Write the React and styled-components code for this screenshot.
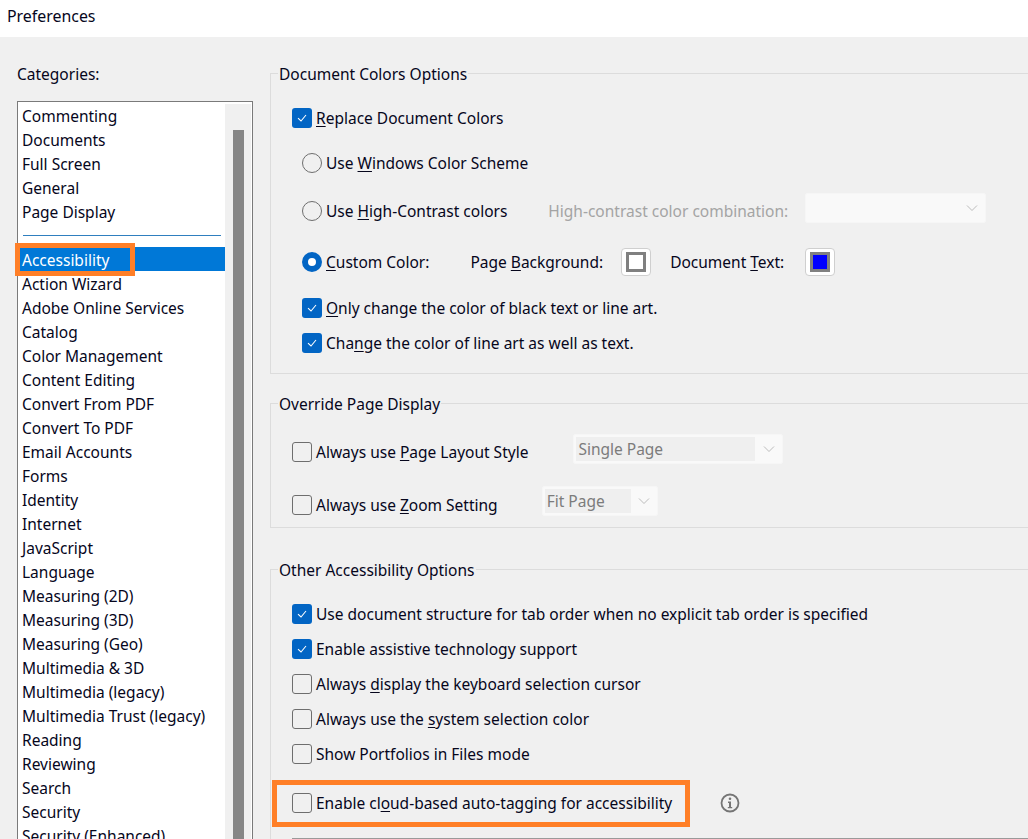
import React from "react";
import styled, { createGlobalStyle } from "styled-components";

const Global = createGlobalStyle`
  html, body { margin: 0; padding: 0; background: #f0f0f0; }
  body { font-family: "Noto Sans", "Liberation Sans", sans-serif; font-size: 15.5px; color: #06061c; }
`;
const Page = styled.div`
  width: 1028px; height: 839px; overflow: hidden; display: flex; flex-direction: column; background: #f0f0f0;
`;
const TitleBar = styled.header`
  height: 37px; flex: none; background: #fff; padding-left: 7px; display: flex; align-items: center; font-size: 15.9px; padding-bottom: 6px; box-sizing: border-box;
`;
const Body = styled.div`
  display: flex; flex: 1; min-height: 0; padding-left: 17px;
`;
const Sidebar = styled.aside`
  width: 236px; flex: none; display: flex; flex-direction: column;
`;
const CategoriesLabel = styled.div`
  height: 24px; line-height: 24px; margin-top: 25px; margin-bottom: 15px;
`;
const ListBox = styled.div`
  flex: 1; min-height: 0; display: flex; border: 1px solid #7a7a7a; border-bottom: none; background: #fff; padding: 2px 1px 0 1px;
`;
const Items = styled.ul`
  list-style: none; margin: 0; padding: 0; width: 206px; flex: none;
`;
const Item = styled.li`
  position: relative; height: 24px; padding-left: 3px; white-space: nowrap;
  line-height: ${p => (p.$selected ? 26 : 24)}px;
  margin-bottom: ${p => (p.$selected ? 1 : 0)}px;
  background: ${p => (p.$selected ? "#0078d7" : "transparent")};
  color: ${p => (p.$selected ? "#fff" : "inherit")};
`;
const ListDivider = styled.li`
  height: 23px; display: flex; align-items: center; padding: 0 4px;
  &::before { content: ""; flex: 1; height: 1px; background: #2f7fbf; }
`;
const Callout = styled.span`
  position: absolute; left: -4px; top: -4px; width: 120px; height: 33px; box-sizing: border-box; border: 5px solid #ff7f27;
`;
const ScrollTrack = styled.div`
  flex: 1; background: #f0f0f0; display: flex; justify-content: center; padding-top: 26px;
`;
const ScrollThumb = styled.div`
  width: 11px; background: #868686;
`;
const Main = styled.main`
  flex: 1; min-width: 0; margin-left: 17px; padding-top: 24px; display: flex; flex-direction: column;
`;
const Group = styled.fieldset`
  margin: 0 -20px ${p => p.$gap || 0}px 0; padding: 0 0 0 21px; min-width: 0;
  border: 1px solid #dcdcdc; border-right: none;
  border-radius: 0; height: ${p => p.$height}px; box-sizing: border-box; flex: none;
`;
const Legend = styled.legend`
  padding: 0 1px; margin-left: -14px; height: 24px; line-height: 26px;
`;
const Row = styled.div`
  display: flex; align-items: center; height: 24px; margin-top: ${p => p.$top}px; margin-left: ${p => p.$indent || 0}px; white-space: nowrap;
`;
const Box = styled.span`
  width: 20px; height: 20px; box-sizing: border-box; flex: none; margin-right: 4px; border-radius: 3px;
  display: inline-flex; align-items: center; justify-content: center;
  background: ${p => (p.$on ? "#0265c4" : "transparent")};
  border: ${p => (p.$on ? "none" : "1px solid #6e6e6e")};
`;
const Radio = styled.span`
  width: 20px; height: 20px; box-sizing: border-box; flex: none; margin-right: 4px; border-radius: 50%;
  display: inline-flex; align-items: center; justify-content: center;
  border: ${p => (p.$on ? "6px solid #0265c4" : "1px solid #6e6e6e")};
  background: ${p => (p.$on ? "#fff" : "transparent")};
`;
const Key = styled.span`
  text-decoration: underline; text-underline-offset: 2px; text-decoration-thickness: 1px;
`;
const Muted = styled.span`
  color: #a4a4a4; margin-left: ${p => p.$left}px;
`;
const Spaced = styled.span`
  margin-left: ${p => p.$left}px;
`;
const Select = styled.div`
  width: ${p => p.$width}px; height: 30px; box-sizing: border-box; padding: 2px 0 2px 2px; margin-left: ${p => p.$left}px; margin-top: ${p => p.$lift || 0}px;
  display: flex; align-items: stretch; background: #f9f9f9; border: 1px solid #f6f6f6; border-radius: 2px;
`;
const SelectValue = styled.span`
  width: ${p => p.$width}px; background: #efefef; color: #7c7c7c; padding-left: 2px; line-height: 25px; box-sizing: border-box;
`;
const Chevron = styled.svg`
  margin: auto 6px auto auto; width: 14px; height: 14px; flex: none;
`;
const Swatch = styled.span`
  width: 30px; height: 28px; box-sizing: border-box; border: 1px solid #cfcfcf; border-radius: 4px; background: #fff; margin-left: ${p => p.$left}px;
  display: inline-flex; align-items: center; justify-content: center;
`;
const SwatchFill = styled.span`
  width: 20px; height: 20px; box-sizing: border-box; border: 3px solid #808080; background: ${p => p.$color};
`;
const CloudRow = styled.div`
  position: relative; display: flex; align-items: center; height: 24px; margin-top: 25px; white-space: nowrap;
`;
const CloudCallout = styled.span`
  position: absolute; left: -20px; top: -11px; width: 418px; height: 47px; box-sizing: border-box; border: 5px solid #ff7f27;
`;
const InfoIcon = styled.svg`
  width: 20px; height: 20px; margin-left: 48px; flex: none;
`;
const RuleLine = styled.div`
  height: 1px; background: #9a9a9a; margin-top: 23px;
`;

const Check = () => (
  <svg width="12" height="12" viewBox="0 0 12 12" fill="none" stroke="#fff" strokeWidth="1.1">
    <path d="M2 6.2 L5 9 L10 3" />
  </svg>
);
const Down = () => (
  <Chevron viewBox="0 0 14 14" fill="none" stroke="#bcbcbc" strokeWidth="1"><path d="M2 4.5 L7 9.5 L12 4.5" /></Chevron>
);
const CheckRow = ({ on, top, indent, children }) => (
  <Row $top={top} $indent={indent}>
    <Box $on={on}>{on && <Check />}</Box>
    {children}
  </Row>
);
const RadioRow = ({ on, top, indent, children }) => (
  <Row $top={top} $indent={indent}>
    <Radio $on={on} />
    {children}
  </Row>
);

const before = ["Commenting", "Documents", "Full Screen", "General", "Page Display"];
const after = ["Action Wizard", "Adobe Online Services", "Catalog", "Color Management", "Content Editing", "Convert From PDF", "Convert To PDF", "Email Accounts", "Forms", "Identity", "Internet", "JavaScript", "Language", "Measuring (2D)", "Measuring (3D)", "Measuring (Geo)", "Multimedia & 3D", "Multimedia (legacy)", "Multimedia Trust (legacy)", "Reading", "Reviewing", "Search", "Security", "Security (Enhanced)"];

export default function App() {
  return (
    <Page>
      <Global />
      <TitleBar>Preferences</TitleBar>
      <Body>
        <Sidebar>
          <CategoriesLabel>Categories:</CategoriesLabel>
          <ListBox>
            <Items>
              {before.map(t => <Item key={t}>{t}</Item>)}
              <ListDivider />
              <Item $selected>Accessibility<Callout /></Item>
              {after.map(t => <Item key={t}>{t}</Item>)}
            </Items>
            <ScrollTrack><ScrollThumb /></ScrollTrack>
          </ListBox>
        </Sidebar>
        <Main>
          <Group $height={313} $gap={17}>
            <Legend>Document Colors Options</Legend>
            <CheckRow on top={21}><span><Key>R</Key>eplace Document Colors</span></CheckRow>
            <RadioRow top={21} indent={10}><span>Use <Key>W</Key>indows Color Scheme</span></RadioRow>
            <RadioRow top={24} indent={10}>
              <span>Use <Key>H</Key>igh-Contrast colors</span>
              <Muted $left={41}>High-contrast color combination:</Muted>
              <Select $width={181} $left={17} $lift={-6}><Down /></Select>
            </RadioRow>
            <RadioRow on top={27} indent={10}>
              <span><Key>C</Key>ustom Color:</span>
              <Spaced $left={41}>Page <Key>B</Key>ackground:</Spaced>
              <Swatch $left={18}><SwatchFill $color="#fff" /></Swatch>
              <Spaced $left={19}>Document <Key>T</Key>ext:</Spaced>
              <Swatch $left={21}><SwatchFill $color="#0000ff" /></Swatch>
            </RadioRow>
            <CheckRow on top={22} indent={10}><span><Key>O</Key>nly change the color of black text or line art.</span></CheckRow>
            <CheckRow on top={11} indent={10}><span>Cha<Key>n</Key>ge the color of line art as well as text.</span></CheckRow>
          </Group>
          <Group $height={137} $gap={29}>
            <Legend>Override Page Display</Legend>
            <CheckRow top={25}>
              <span>Always use <Key>P</Key>age Layout Style</span>
              <Select $width={210} $left={45} $lift={-6}>
                <SelectValue $width={179}>Single Page</SelectValue><Down />
              </Select>
            </CheckRow>
            <CheckRow top={29}>
              <span>Always use <Key>Z</Key>oom Setting</span>
              <Select $width={116} $left={44} $lift={-8}>
                <SelectValue $width={86}>Fit Page</SelectValue><Down />
              </Select>
            </CheckRow>
          </Group>
          <Group $height={300}>
            <Legend>Other Accessibility Options</Legend>
            <CheckRow on top={21}><span>Use document structure for tab order when no explicit tab order is specified</span></CheckRow>
            <CheckRow on top={11}><span>Enable assistive technology support</span></CheckRow>
            <CheckRow top={11}><span>Always <Key>d</Key>isplay the keyboard selection cursor</span></CheckRow>
            <CheckRow top={11}><span>Always use the <Key>s</Key>ystem selection color</span></CheckRow>
            <CheckRow top={11}><span>Show Portfolios in Files mode</span></CheckRow>
            <CloudRow>
              <CloudCallout />
              <Box />
              <span>Enable cl<Key>o</Key>ud-based auto-tagging for accessibility</span>
              <InfoIcon viewBox="0 0 20 20" fill="none">
                <circle cx="10" cy="10" r="8.5" stroke="#757575" strokeWidth="1.8" />
                <circle cx="10" cy="5.8" r="1.3" fill="#757575" />
                <path d="M8 8.6h3v5.4h1.2v1.3H7.8V14H9V9.9H8z" fill="#757575" />
              </InfoIcon>
            </CloudRow>
            <RuleLine />
          </Group>
        </Main>
      </Body>
    </Page>
  );
}
